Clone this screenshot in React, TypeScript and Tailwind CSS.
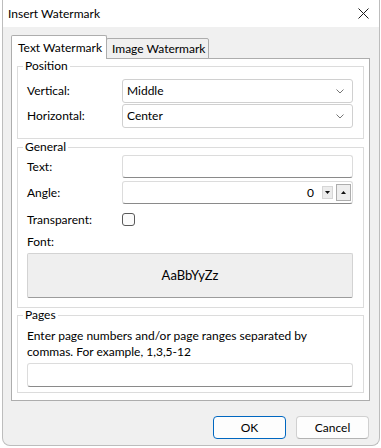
import React from 'react';

const font = "font-['Lato','Liberation_Sans',sans-serif]";

function Chevron() {
  return (
    <svg width="8" height="5" viewBox="0 0 8 5" className="shrink-0">
      <path d="M0.5 0.5 L4 4 L7.5 0.5" fill="none" stroke="#767676" strokeWidth="1" />
    </svg>
  );
}

function Select({ value }: { value: string }) {
  return (
    <div className="w-[231px] h-[24px] border border-[#d0d0d0] rounded-[3px] bg-white flex items-center justify-between pl-[4px] pr-[8px]">
      <span>{value}</span>
      <Chevron />
    </div>
  );
}

function Row({ label, children, className = '' }: { label: string; children: React.ReactNode; className?: string }) {
  return (
    <div className={`flex items-center ${className}`}>
      <span className="w-[95px] shrink-0">{label}</span>
      {children}
    </div>
  );
}

function Group({ title, children, className = '' }: { title: string; children: React.ReactNode; className?: string }) {
  return (
    <fieldset className={`border border-[#dcdcdc] ${className}`}>
      <legend className="ml-[5px] px-[2px] leading-[14px]">{title}</legend>
      <div className="pl-[9px] pr-[10px]">{children}</div>
    </fieldset>
  );
}

export default function App() {
  return (
    <div className={`w-[381px] h-[448px] bg-white text-[12px] text-black ${font}`}>
      <div className="ml-[2px] w-[378px] h-[446px] border border-t-0 border-[#bdbdbd] rounded-b-[8px] bg-[#f0f0f0] flex flex-col overflow-hidden">
        {/* Title bar */}
        <div className="h-[27px] bg-white flex items-center justify-between pl-[5px] pr-[10px]">
          <span className="text-[12px] pt-[1px]">Insert Watermark</span>
          <svg width="11" height="11" viewBox="0 0 11 11">
            <path d="M0.5 0.5 L10.5 10.5 M10.5 0.5 L0.5 10.5" stroke="#1b1b1b" strokeWidth="1" />
          </svg>
        </div>

        <div className="pl-[8px] pr-[9px]">
          {/* Tabs */}
          <div className="mt-[8px] h-[24px] -mb-px flex items-end relative z-10">
            <div className="w-[96px] h-[24px] bg-white border border-b-0 border-[#adadad] rounded-t-[2px] pl-[6px] pt-[3px] relative z-10">
              Text Watermark
            </div>
            <div className="-ml-px w-[103px] h-[21px] bg-[#f0f0f0] border border-[#adadad] rounded-t-[2px] pl-[5px] pt-[1px]">
              Image Watermark
            </div>
          </div>

          {/* Tab panel */}
          <div className="h-[343px] bg-white border border-[#adadad] px-[5px]">
            <Group title="Position" className="pb-[10px]">
              <Row label="Vertical:" className="mt-[6px]">
                <Select value="Middle" />
              </Row>
              <Row label="Horizontal:" className="mt-[1px]">
                <Select value="Center" />
              </Row>
            </Group>

            <Group title="General" className="mt-[1px] pb-[9px]">
              <Row label="Text:" className="mt-[1px]">
                <div className="w-[231px] h-[23px] border border-[#dcdcdc] border-b-[#8a8a8a] rounded-[3px] bg-white" />
              </Row>
              <Row label="Angle:" className="mt-[3px]">
                <div className="w-[231px] h-[23px] border border-[#dcdcdc] border-b-[#8a8a8a] rounded-[3px] bg-white flex items-center justify-end pr-[1px]">
                  <span className="mr-[8px]">0</span>
                  <div className="w-[11px] h-[13px] border border-[#d6d6d6] bg-[#ececec] flex items-center justify-center">
                    <svg width="5" height="3" viewBox="0 0 5 3">
                      <path d="M0 0 L5 0 L2.5 3 Z" fill="#111" />
                    </svg>
                  </div>
                  <div className="ml-[3px] w-[15px] h-[17px] border border-[#adadad] bg-[#eeeeee] flex items-center justify-center">
                    <svg width="5" height="3" viewBox="0 0 5 3">
                      <path d="M0 3 L5 3 L2.5 0 Z" fill="#111" />
                    </svg>
                  </div>
                </div>
              </Row>
              <Row label="Transparent:" className="mt-[9px] h-[13px]">
                <div className="w-[13px] h-[13px] border border-[#5a5a5a] rounded-[3px] bg-[#fbfbfb]" />
              </Row>
              <div className="mt-[8px] leading-[16px]">Font:</div>
              <div className="mt-[3px] w-[326px] h-[45px] bg-[#efefef] border border-[#d3d3d3] border-b-[#9c9c9c] rounded-[2px] flex items-center justify-center text-[13px]">
                AaBbYyZz
              </div>
            </Group>

            <Group title="Pages" className="pb-[5px]">
              <p className="mt-[6px] leading-[16px]">
                Enter page numbers and/or page ranges separated by
                <br />
                commas. For example, 1,3,5-12
              </p>
              <div className="mt-[3px] w-[326px] h-[24px] border border-[#dcdcdc] border-b-[#8a8a8a] rounded-[3px] bg-white" />
            </Group>
          </div>
        </div>

        {/* Footer */}
        <div className="mt-[15px] flex justify-end gap-[10px] pr-[10px]">
          <button className="w-[73px] h-[23px] border border-[#0067c0] rounded-[4px] bg-[#fdfdfd]">OK</button>
          <button className="w-[73px] h-[23px] border border-[#d0d0d0] border-b-[#b3b3b3] rounded-[4px] bg-[#fdfdfd]">Cancel</button>
        </div>
      </div>
    </div>
  );
}
